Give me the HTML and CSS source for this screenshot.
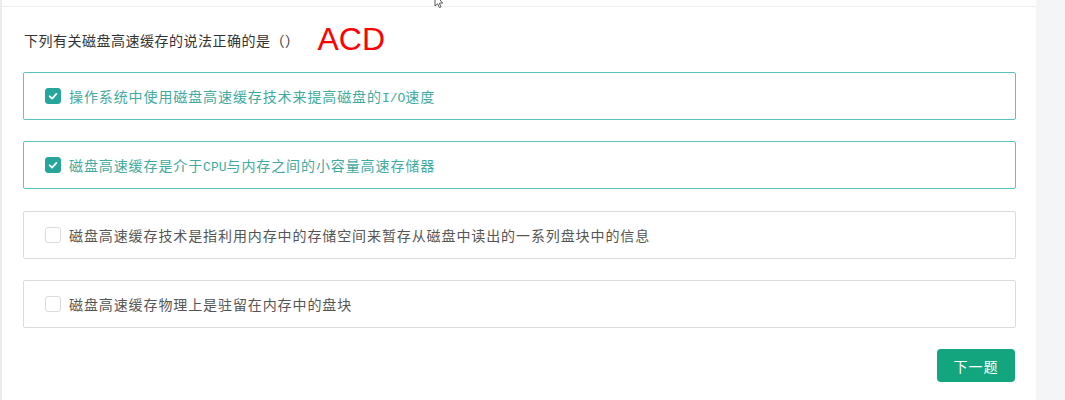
FILE: index.html
```html
<!DOCTYPE html>
<html lang="zh">
<head>
<meta charset="utf-8">
<title>题目</title>
<link rel="stylesheet" href="styles.css">
</head>
<body>
<div class="page">
  <div class="strip"></div>
  <div class="panel">
    <div class="topbar"></div>
    <div class="content">
      <div class="question">
        <span class="q-text">下列有关磁盘高速缓存的说法正确的是（）</span>
        <span class="answer">ACD</span>
      </div>
      <div class="option checked">
        <span class="box"><svg viewBox="0 0 16 16" width="16" height="16"><path d="M4.2 8.3 L7 11 L11.8 5.6" fill="none" stroke="#fff" stroke-width="2" stroke-linecap="round" stroke-linejoin="round"/></svg></span>
        <span class="label">操作系统中使用磁盘高速缓存技术来提高磁盘的<span class="mono">I/O</span>速度</span>
      </div>
      <div class="option checked">
        <span class="box"><svg viewBox="0 0 16 16" width="16" height="16"><path d="M4.2 8.3 L7 11 L11.8 5.6" fill="none" stroke="#fff" stroke-width="2" stroke-linecap="round" stroke-linejoin="round"/></svg></span>
        <span class="label">磁盘高速缓存是介于<span class="mono">CPU</span>与内存之间的小容量高速存储器</span>
      </div>
      <div class="option">
        <span class="box"></span>
        <span class="label">磁盘高速缓存技术是指利用内存中的存储空间来暂存从磁盘中读出的一系列盘块中的信息</span>
      </div>
      <div class="option">
        <span class="box"></span>
        <span class="label">磁盘高速缓存物理上是驻留在内存中的盘块</span>
      </div>
      <div class="actions">
        <button class="next">下一题</button>
      </div>
    </div>
  </div>
</div>
<svg class="cursor" viewBox="0 0 10 10" width="10" height="10"><path d="M1 -6 L1 6 L3.6 3.8 L5.4 7.6 L7 6.8 L5.3 3.2 L8.6 3 Z" fill="#fff" stroke="#444" stroke-width="0.9" stroke-linejoin="round"/></svg>
</body>
</html>
```
FILE: styles.css
```css
* { box-sizing: border-box; }
html, body { margin: 0; padding: 0; }
body {
  background: #f4f5f6;
  font-family: "Noto Sans CJK SC", "Noto Sans", sans-serif;
  color: #333;
  position: relative;
}
.page {
  display: flex;
  height: 400px;
  overflow: hidden;
}
.strip {
  width: 2px;
  background: #ececec;
}
.panel {
  width: 1034px;
  background: #fff;
}
.topbar {
  height: 7px;
  border-bottom: 1px solid #eeeeee;
}
.content {
  padding: 0 20px 0 21px;
}
.question {
  height: 65px;
  display: flex;
  align-items: center;
  padding-left: 1px;
}
.q-text {
  font-size: 14px;
  letter-spacing: 0.5px;
  color: #333;
}
.answer {
  margin-left: 18px;
  font-family: "Liberation Sans", Arial, sans-serif;
  font-size: 32px;
  color: #ff0000;
  line-height: 1;
  margin-top: -2px;
}
.option {
  height: 48px;
  border: 1px solid #dcdcdc;
  border-radius: 2px;
  display: flex;
  align-items: center;
  padding-left: 21px;
  margin-bottom: 21px;
}
.option:nth-child(3) { margin-bottom: 22px; }
.option.checked {
  border-color: #5cc4bc;
}
.box {
  width: 16px;
  height: 16px;
  border: 1px solid #dcdcdc;
  border-radius: 3px;
  display: flex;
  align-items: center;
  justify-content: center;
  margin-right: 8px;
  flex: none;
}
.option.checked .box {
  background: #26a69a;
  border-color: #26a69a;
}
.box svg { display: block; }
.label {
  font-size: 14px;
  letter-spacing: 0.9px;
  color: #555;
}
.option.checked .label {
  color: #3eaaa0;
}
.mono {
  font-family: "Liberation Mono", monospace;
  font-size: 13px;
  letter-spacing: 0;
}
.actions {
  display: flex;
  justify-content: flex-end;
  padding-right: 1px;
}
.next {
  width: 78px;
  height: 33px;
  border: none;
  border-radius: 4px;
  background: #13a57d;
  color: #fff;
  font-family: "Noto Sans CJK SC", sans-serif;
  font-size: 14px;
  letter-spacing: 1px;
  cursor: pointer;
}
.cursor {
  position: absolute;
  left: 434px;
  top: 0;
}
```
